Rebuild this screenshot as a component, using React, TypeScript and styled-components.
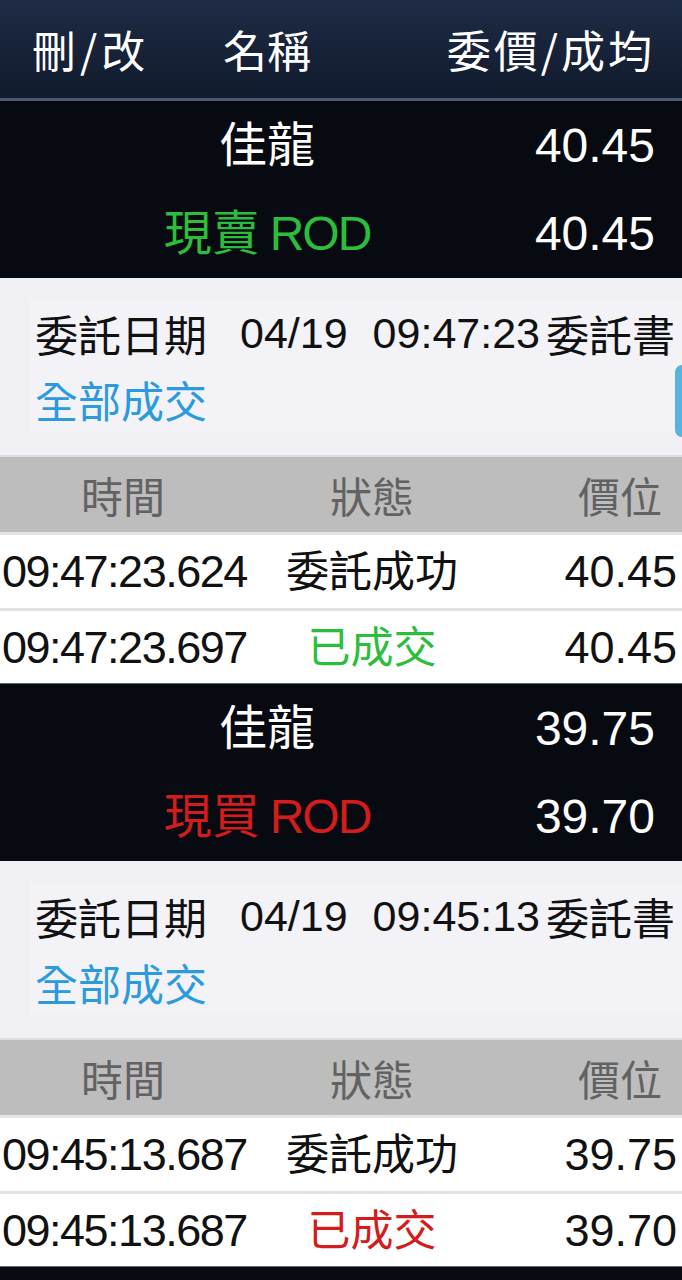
import React from 'react';
import styled, { createGlobalStyle } from 'styled-components';

const GlobalStyle = createGlobalStyle`
  html, body {
    margin: 0;
    padding: 0;
    background: #070a10;
  }
  body {
    font-family: "Liberation Sans", "Noto Sans CJK TC", sans-serif;
    -webkit-font-smoothing: antialiased;
  }
`

const Page = styled.div`
  width: 682px;
  overflow: hidden;
`

const Header = styled.div`
  display: grid;
  grid-template-columns: 140px 254px 1fr;
  align-items: center;
  height: 98px;
  background: linear-gradient(#1e2b45, #111b2e);
  border-bottom: 3px solid #4b5a72;
  color: #fff;
  font-size: 44px;
  font-family: "Noto Sans CJK TC", sans-serif;
`

const HeadCell = styled.div<{ $align: 'left' | 'center' | 'right'; $spacing?: number }>`
  text-align: ${p => p.$align};
  padding-left: ${p => (p.$align === 'left' ? '32px' : '0')};
  padding-right: ${p => (p.$align === 'right' ? `${30 - (p.$spacing ?? 0)}px` : '0')};
  letter-spacing: ${p => p.$spacing ?? 0}px;
  white-space: nowrap;
  line-height: 1;
`

const Summary = styled.div<{ $first?: boolean }>`
  background: #070a10;
  border-top: ${p => (p.$first ? 'none' : '1px solid #5d6673')};
  padding: 1px 0 0;
`

const SummaryRow = styled.div`
  display: grid;
  grid-template-columns: 140px 254px 1fr;
  align-items: center;
  height: 88px;
  font-size: 48px;
  color: #fff;
`

const NameCell = styled.div<{ $color?: string }>`
  grid-column: 2;
  text-align: center;
  white-space: nowrap;
  color: ${p => p.$color || '#fff'};
  line-height: 1;
`

const Code = styled.span`
  margin-left: 10px;
  letter-spacing: -2px;
`

const PriceCell = styled.div`
  grid-column: 3;
  text-align: right;
  padding-right: 27px;
  line-height: 1;
`

const Info = styled.div`
  position: relative;
  background: #efeff4;
  padding: 22px 0 23px 30px;
`

const InfoBox = styled.div`
  background: #f2f2f7;
  font-size: 43px;
`

const InfoLine = styled.div<{ $color?: string }>`
  display: flex;
  align-items: center;
  height: 66px;
  padding-left: 5px;
  white-space: nowrap;
  overflow: hidden;
  color: ${p => p.$color || '#111'};
`

const Gap = styled.span<{ $w: number }>`
  display: inline-block;
  width: ${p => p.$w}px;
  flex: none;
`

const ScrollTab = styled.div`
  position: absolute;
  right: 0;
  top: 87px;
  width: 7px;
  height: 72px;
  background: #5ab3dc;
  border-radius: 8px 0 0 8px;
`

const TableHead = styled.div`
  display: grid;
  grid-template-columns: 246px 252px 1fr;
  align-items: center;
  height: 75px;
  background: #bdbdbd;
  border-top: 2px solid #dcdcdc;
  border-bottom: 3px solid #e4e4e4;
  color: #626262;
  font-size: 42px;
  font-family: "Noto Sans CJK TC", sans-serif;
`

const Cell = styled.div<{ $align: 'left' | 'center' | 'right'; $pad?: number; $color?: string }>`
  text-align: ${p => p.$align};
  padding-left: ${p => (p.$align === 'left' ? p.$pad ?? 0 : 0)}px;
  padding-right: ${p => (p.$align === 'right' ? p.$pad ?? 0 : 0)}px;
  color: ${p => p.$color || 'inherit'};
  white-space: nowrap;
  line-height: 1;
`

const TimeCell = styled(Cell)`
  letter-spacing: -1.5px;
`

const Row = styled.div<{ $last?: boolean }>`
  display: grid;
  grid-template-columns: 246px 252px 1fr;
  align-items: center;
  height: ${p => (p.$last ? 72 : 73)}px;
  background: #fff;
  border-bottom: ${p => (p.$last ? 'none' : '3px solid #e3e3e3')};
  color: #111;
  font-size: 45px;
`

const StatusText = styled.span`
  font-size: 43px;
`

const Tail = styled.div`
  height: 12px;
  background: #070a10;
  border-top: 1px solid #5d6673;
`

type Fill = { time: string; status: string; color?: string; price: string }

type Order = {
  name: string;
  side: string;
  sideColor: string;
  price: string;
  avg: string;
  date: string;
  time: string;
  status: string;
  fills: Fill[];
  tab?: boolean;
}

const orders: Order[] = [
  {
    name: '佳龍', side: '現賣', sideColor: '#2dbd3c', price: '40.45', avg: '40.45',
    date: '04/19', time: '09:47:23', status: '全部成交', tab: true,
    fills: [
      { time: '09:47:23.624', status: '委託成功', price: '40.45' },
      { time: '09:47:23.697', status: '已成交', color: '#2dbd3c', price: '40.45' },
    ],
  },
  {
    name: '佳龍', side: '現買', sideColor: '#d41c1c', price: '39.75', avg: '39.70',
    date: '04/19', time: '09:45:13', status: '全部成交',
    fills: [
      { time: '09:45:13.687', status: '委託成功', price: '39.75' },
      { time: '09:45:13.687', status: '已成交', color: '#d41c1c', price: '39.70' },
    ],
  },
]

const OrderBlock: React.FC<{ order: Order; first?: boolean }> = ({ order, first }) => (
  <div>
    <Summary $first={first}>
      <SummaryRow>
        <NameCell>{order.name}</NameCell>
        <PriceCell>{order.price}</PriceCell>
      </SummaryRow>
      <SummaryRow>
        <NameCell $color={order.sideColor}>{order.side}<Code>ROD</Code></NameCell>
        <PriceCell>{order.avg}</PriceCell>
      </SummaryRow>
    </Summary>
    <Info>
      <InfoBox>
        <InfoLine>
          委託日期<Gap $w={33} />{order.date}<Gap $w={25} />{order.time}<Gap $w={6} />委託書
        </InfoLine>
        <InfoLine $color="#2b9ade">{order.status}</InfoLine>
      </InfoBox>
      {order.tab && <ScrollTab />}
    </Info>
    <TableHead>
      <Cell $align="center">時間</Cell>
      <Cell $align="center">狀態</Cell>
      <Cell $align="right" $pad={20}>價位</Cell>
    </TableHead>
    {order.fills.map((f, i) => (
      <Row key={i} $last={i === order.fills.length - 1}>
        <TimeCell $align="left" $pad={2}>{f.time}</TimeCell>
        <Cell $align="center" $color={f.color}><StatusText>{f.status}</StatusText></Cell>
        <Cell $align="right" $pad={5}>{f.price}</Cell>
      </Row>
    ))}
  </div>
)

const App: React.FC = () => (
  <Page>
    <GlobalStyle />
    <Header>
      <HeadCell $align="left" $spacing={4}>刪/改</HeadCell>
      <HeadCell $align="center">名稱</HeadCell>
      <HeadCell $align="right" $spacing={3}>委價/成均</HeadCell>
    </Header>
    {orders.map((o, i) => (
      <OrderBlock key={i} order={o} first={i === 0} />
    ))}
    <Tail />
  </Page>
)

export default App
